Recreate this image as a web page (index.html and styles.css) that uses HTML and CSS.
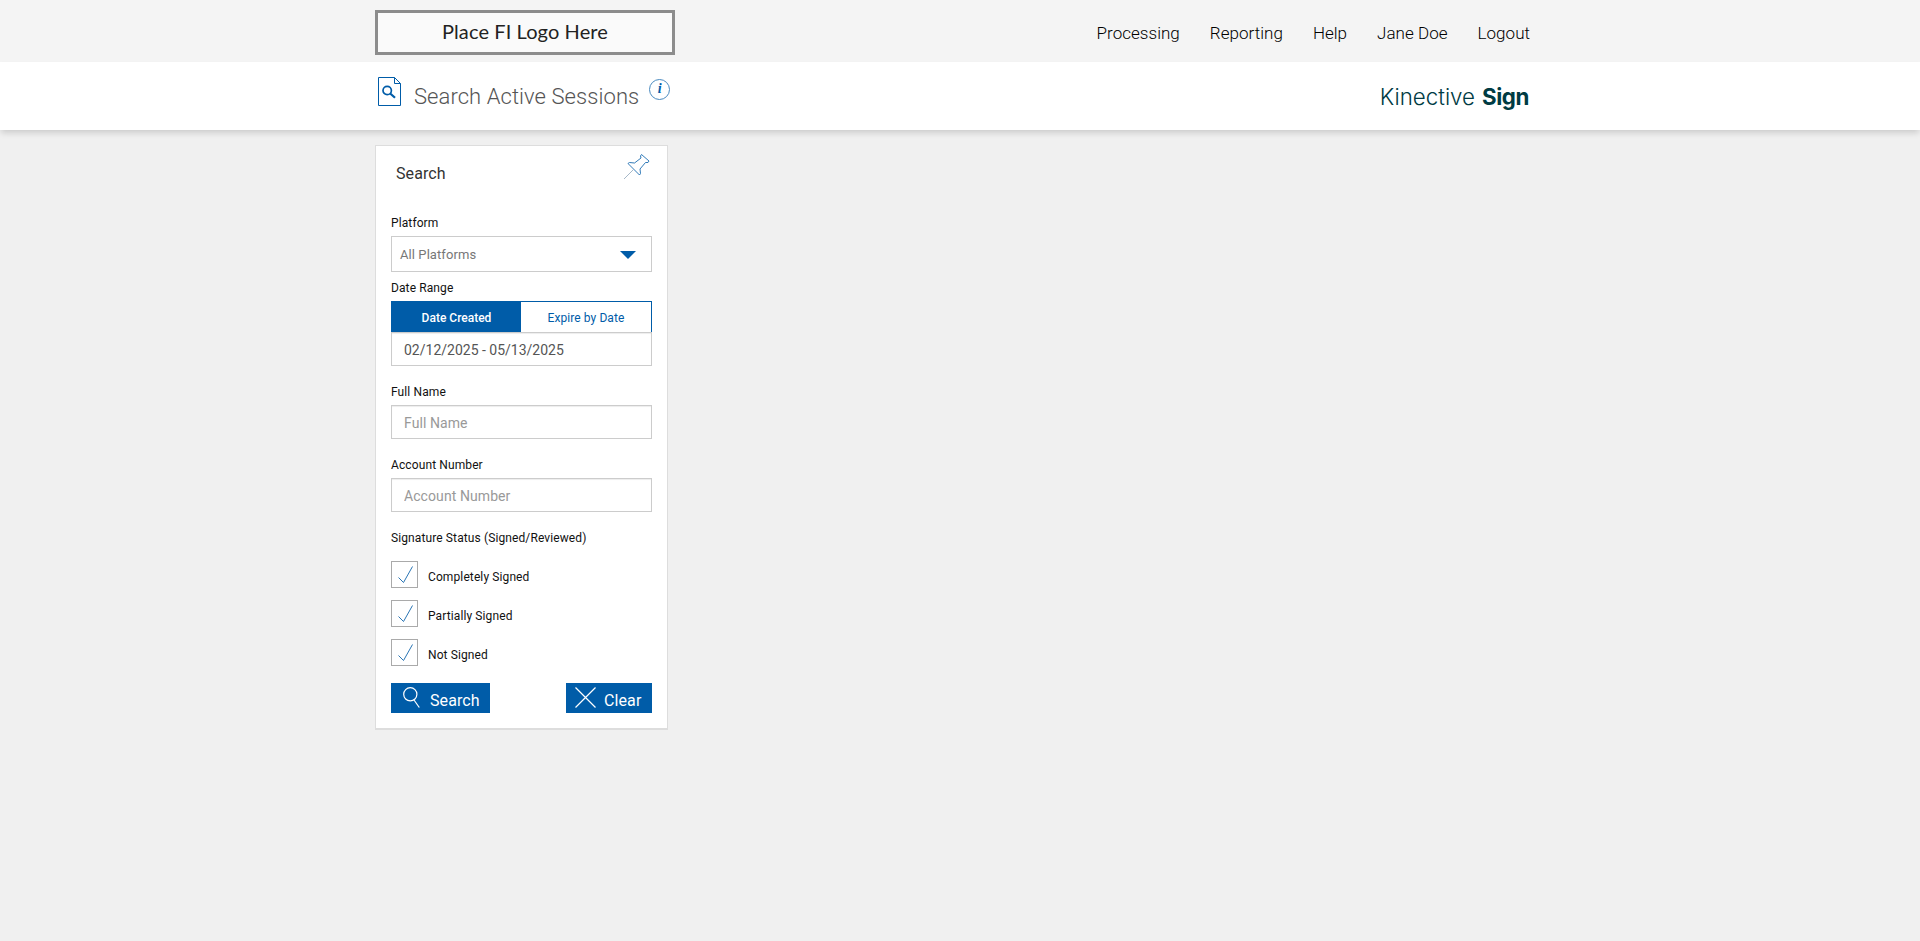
FILE: index.html
```
<!DOCTYPE html>
<html lang="en">
<head>
  <meta charset="UTF-8" />
  <meta name="viewport" content="width=device-width, initial-scale=1.0"/>
  <title>Search Active Sessions</title>
  <link rel="stylesheet" href="styles.css">
</head>
<body>
  <header class="top-bar">
    <div class="container">
      <div class="fi-logo"><span>Place FI Logo Here</span></div>
      <nav class="main-nav">
        <a>Processing</a>
        <a>Reporting</a>
        <a>Help</a>
        <a>Jane Doe</a>
        <a>Logout</a>
      </nav>
    </div>
  </header>

  <div class="title-bar">
    <div class="container">
      <div class="page-title">
        <svg class="doc-icon" width="24" height="30" viewBox="0 0 24 30" fill="none" stroke="#005ca8">
          <path d="M.5 .5H16.500L22.500 6.500V28.500H.5Z M16.500 .5V6.500H22.500"/>
          <circle cx="9.200" cy="13.500" r="4.200" stroke-width="1.700"/>
          <path d="M12.200 16.500L17 20.800" stroke-width="2.200"/>
        </svg>
        <h1>Search Active Sessions</h1>
        <span class="info">i</span>
      </div>
      <div class="brand"><span class="brand-name">Kinective</span><span class="brand-product">Sign</span></div>
    </div>
  </div>

  <main class="container">
    <form class="search-panel">
      <div class="panel-head">
        <h2>Search</h2>
        <svg class="pin" width="27" height="27" viewBox="0 0 27 27" fill="none" stroke="#1b6cb0" stroke-width=".9">
          <path d="M18.500 .5L26 7L25 8.500L22.500 8.500L17 15L17.500 19.500L16.500 21L5 9.500L6.500 8.500L11.500 9L18 4L17.500 2Z"/>
          <path d="M10.500 15.500L1 25" stroke="#8fa6ba" stroke-width=".8"/>
        </svg>
      </div>

      <label class="field-label">Platform</label>
      <div class="select">
        <span>All Platforms</span>
        <svg width="16" height="8" viewBox="0 0 16 8"><path d="M0 0H16L8 8Z" fill="#005ca8"/></svg>
      </div>

      <label class="field-label date-label">Date Range</label>
      <div class="tabs">
        <div class="tab active">Date Created</div>
        <div class="tab">Expire by Date</div>
      </div>
      <input class="text-input date-input" type="text" value="02/12/2025 - 05/13/2025">

      <label class="field-label">Full Name</label>
      <input class="text-input" type="text" placeholder="Full Name">

      <label class="field-label">Account Number</label>
      <input class="text-input" type="text" placeholder="Account Number">

      <label class="field-label">Signature Status (Signed/Reviewed)</label>
      <div class="checks">
        <div class="check">
          <span class="box"><svg width="15" height="18" viewBox="0 0 15 18"><path d="M.5 11.500L5.500 16.500L14.500 .5"/></svg></span>
          <span>Completely Signed</span>
        </div>
        <div class="check">
          <span class="box"><svg width="15" height="18" viewBox="0 0 15 18"><path d="M.5 11.500L5.500 16.500L14.500 .5"/></svg></span>
          <span>Partially Signed</span>
        </div>
        <div class="check">
          <span class="box"><svg width="15" height="18" viewBox="0 0 15 18"><path d="M.5 11.500L5.500 16.500L14.500 .5"/></svg></span>
          <span>Not Signed</span>
        </div>
      </div>

      <div class="actions">
        <button class="btn btn-search" type="button">
          <svg width="17" height="21" viewBox="0 0 17 21"><circle cx="7.300" cy="7.300" r="6.600"/><path d="M11 13L16.300 20.500"/></svg>
          <span>Search</span>
        </button>
        <button class="btn btn-clear" type="button">
          <svg width="21" height="21" viewBox="0 0 21 21"><path d="M.5 .5L20.500 20.500M20.500 .5L.5 20.500"/></svg>
          <span>Clear</span>
        </button>
      </div>
    </form>
  </main>
</body>
</html>
```
FILE: styles.css
```
* {
  margin: 0;
  padding: 0;
  box-sizing: border-box;
}

body {
  background: #f0f0f0;
  color: #111;
  font-family: Roboto, sans-serif;
  font-size: 12px;
}

.container {
  width: 1170px;
  margin: 0 auto;
}

.top-bar {
  height: 62px;
  background: #f4f4f4;
}

.top-bar .container {
  display: flex;
  justify-content: space-between;
  padding-top: 10px;
}

.fi-logo {
  width: 300px;
  height: 45px;
  border: 3px solid #8c8c8c;
  background: #fafafa;
  text-align: center;
  font: 400 20px/37px Lato, sans-serif;
  letter-spacing: 0.1px;
  color: #222;
}

.main-nav {
  display: flex;
  gap: 30px;
  padding-right: 15px;
  font-size: 17px;
  font-weight: 300;
  line-height: 46px;
  letter-spacing: 0.03px;
  color: #000;
}

.title-bar {
  height: 68px;
  background: #fff;
  box-shadow: 0 4px 6px -1px rgba(0, 0, 0, 0.15);
}

.title-bar .container {
  display: flex;
  justify-content: space-between;
}

.page-title {
  display: flex;
  align-items: flex-start;
  padding-left: 3px;
}

.doc-icon {
  margin-top: 15px;
}

.page-title h1 {
  margin: 20px 0 0 12px;
  font-size: 22px;
  font-weight: 300;
  line-height: 30px;
  letter-spacing: 0.07px;
  color: #555;
}

.info {
  width: 21px;
  height: 21px;
  margin: 17px 0 0 10px;
  border: 1px solid #4a8abf;
  border-radius: 50%;
  text-align: center;
  font: italic bold 14px/18px "Liberation Serif", serif;
  color: #005ca8;
}

.brand {
  display: flex;
  gap: 7px;
  padding: 20px 16px 0 0;
  font: 300 22.3px/30px Inter, sans-serif;
  color: #003b43;
}

.brand-product {
  font-weight: 700;
  letter-spacing: -0.4px;
}

.search-panel {
  width: 293px;
  height: 585px;
  margin-top: 15px;
  padding: 0 15px;
  background: #fff;
  border: 1px solid #ddd;
  border-bottom-width: 2px;
}

.panel-head {
  display: flex;
  justify-content: space-between;
  height: 68px;
  padding: 8px 2px 0 5px;
}

.panel-head h2 {
  margin-top: 9px;
  font-size: 16px;
  font-weight: 400;
  line-height: 22px;
  letter-spacing: 0.1px;
  color: #333;
}

.field-label {
  display: block;
  height: 22px;
  line-height: 19px;
  letter-spacing: 0.11px;
}

.select {
  display: flex;
  align-items: center;
  justify-content: space-between;
  height: 36px;
  padding: 1px 15px 0 8px;
  border: 1px solid #ccc;
  font-size: 13px;
  letter-spacing: 0.08px;
  color: #777;
}

.date-label {
  margin-top: 7px;
}

.tabs {
  display: flex;
  height: 31px;
  border: 1px solid #005ca8;
  border-bottom: 0;
}

.tab {
  flex: 1;
  text-align: center;
  line-height: 32px;
  letter-spacing: 0.08px;
  color: #005ca8;
}

.tab.active {
  flex: none;
  width: 129px;
  background: #005ca8;
  color: #fff;
  font-weight: 500;
  letter-spacing: 0;
}

.text-input {
  display: block;
  width: 100%;
  height: 34px;
  margin-bottom: 17px;
  padding: 2px 12px 0;
  border: 1px solid #ccc;
  box-shadow: inset 0 1px 1px rgba(0, 0, 0, 0.075);
  background: #fff;
  font: 14px Roboto, sans-serif;
  color: #555;
}

.text-input::placeholder {
  color: #999;
  letter-spacing: 0.08px;
}

.checks {
  display: flex;
  flex-direction: column;
  gap: 12px;
  margin-top: 10px;
}

.check {
  display: flex;
  gap: 10px;
  height: 27px;
  line-height: 32px;
  letter-spacing: 0.11px;
}

.box {
  width: 27px;
  height: 27px;
  padding: 4px 0 0 6px;
  border: 1px solid #aaa;
  line-height: 0;
}

.box path {
  fill: none;
  stroke: #2a75b4;
}

.actions {
  display: flex;
  justify-content: space-between;
  margin-top: 17px;
}

.btn {
  display: flex;
  height: 30px;
  border: 0;
  background: #005ca8;
  color: #fff;
  font: 16px/35px Roboto, sans-serif;
  letter-spacing: 0.1px;
}

.btn svg {
  margin-top: 4px;
  fill: none;
  stroke: #fff;
  stroke-width: 1.2;
}

.btn-search {
  width: 99px;
  padding-left: 12px;
  gap: 10px;
}

.btn-clear {
  width: 86px;
  padding-left: 9px;
  gap: 8px;
}
```
